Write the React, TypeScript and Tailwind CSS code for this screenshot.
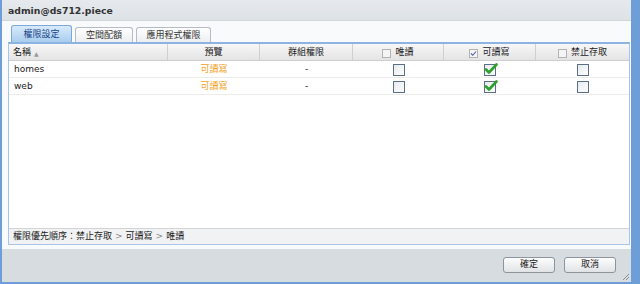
import React from 'react';

const font = { fontFamily: '"DejaVu Sans", "Noto Sans CJK TC", sans-serif' };

function Box({ checked }: { checked?: boolean }) {
  return (
    <svg width="14" height="13" viewBox="0 0 14 13" className="overflow-visible">
      <defs>
        <linearGradient id="bx" x1="0" y1="0" x2="1" y2="1">
          <stop offset="0" stopColor="#e6e9ee" />
          <stop offset="1" stopColor="#ffffff" />
        </linearGradient>
      </defs>
      <rect x="1.5" y="1.5" width="11" height="11" fill="url(#bx)" stroke="#5c6f86" strokeWidth="1" />
      {checked && (
        <path d="M3 6.5 L6 9.5 L13.5 1.5" fill="none" stroke="#2fa12a" strokeWidth="2.6" strokeLinecap="round" strokeLinejoin="round" />
      )}
    </svg>
  );
}

function MiniBox({ checked }: { checked?: boolean }) {
  return (
    <svg width="9" height="9" viewBox="0 0 9 9">
      <rect x="0.5" y="0.5" width="8" height="8" fill="#f4f4f4" stroke="#b3b3b3" />
      {checked && <path d="M2 4.5 L3.8 6.3 L7 2.5" fill="none" stroke="#4a5ea8" strokeWidth="1.1" />}
    </svg>
  );
}

const cols = ['w-[159px]', 'w-[92px]', 'w-[93px]', 'w-[91px]', 'w-[92px]', 'flex-1'];

const rows = [{ name: 'homes' }, { name: 'web' }];

export default function App() {
  return (
    <div className="w-[640px] h-[284px] bg-[#6d9ed8] pl-[2px] pr-[9px] pb-[2px] flex flex-col text-[9px] text-[#1b1b1b]" style={font}>
      <div className="flex-1 flex flex-col bg-[#d7dce1]">
        {/* title */}
        <div className="h-[21px] flex items-center px-[6px] pt-[1px] bg-gradient-to-b from-[#e6eaee] to-[#dde2e7] border-b border-[#d0d5da]">
          <span className="font-bold text-[9.3px] text-[#333]">admin@ds712.piece</span>
        </div>

        {/* body */}
        <div className="h-[228px] bg-[#f9fafb] pl-[6px] pr-[1px] pt-[5px] pb-[4px] flex flex-col">
          {/* tabs */}
          <div className="flex items-end gap-[3px] pl-[3px] h-[16px]">
            <div className="h-[17px] w-[61px] rounded-t-[3px] border border-b-0 border-[#7ea8db] bg-gradient-to-b from-[#d8eafa] to-[#a9cdee] flex items-center justify-center pt-[1px] text-[#15428b]">
              權限設定
            </div>
            <div className="h-[15px] w-[58px] rounded-t-[3px] border border-b-0 border-[#b6bcc3] bg-gradient-to-b from-[#ffffff] to-[#eceef0] flex items-center justify-center pt-[1px] text-[#333]">
              空間配額
            </div>
            <div className="h-[15px] w-[75px] rounded-t-[3px] border border-b-0 border-[#b6bcc3] bg-gradient-to-b from-[#ffffff] to-[#eceef0] flex items-center justify-center pt-[1px] text-[#333]">
              應用程式權限
            </div>
          </div>

          {/* panel */}
          <div className="flex-1 flex flex-col border-t-2 border-[#8db3e2] border-x border-b border-x-[#a9c4e6] border-b-[#a9c4e6] bg-white">
            {/* header */}
            <div className="h-[17px] flex bg-gradient-to-b from-[#f7f7f7] to-[#e4e4e4] border-b border-[#cfcfcf]">
              <div className={`${cols[0]} flex items-center pl-[4px] pt-[2px] border-r border-[#cfcfcf]`}>
                名稱 <span className="ml-[3px] text-[6px] text-[#999]">▲</span>
              </div>
              <div className={`${cols[1]} flex items-center justify-center pt-[2px] border-r border-[#cfcfcf]`}>預覽</div>
              <div className={`${cols[2]} flex items-center justify-center pt-[2px] border-r border-[#cfcfcf]`}>群組權限</div>
              <div className={`${cols[3]} flex items-center justify-center gap-[4px] pt-[2px] border-r border-[#cfcfcf]`}>
                <MiniBox /> 唯讀
              </div>
              <div className={`${cols[4]} flex items-center justify-center gap-[4px] pt-[2px] border-r border-[#cfcfcf]`}>
                <MiniBox checked /> 可讀寫
              </div>
              <div className={`${cols[5]} flex items-center justify-center gap-[4px] pt-[2px]`}>
                <MiniBox /> 禁止存取
              </div>
            </div>

            {rows.map(r => (
              <div key={r.name} className="h-[17px] flex border-b border-[#ececec]">
                <div className={`${cols[0]} flex items-center pl-[5px] pt-[2px] text-[9px]`}>{r.name}</div>
                <div className={`${cols[1]} flex items-center justify-center pt-[2px] text-[#f5a21b]`}>可讀寫</div>
                <div className={`${cols[2]} flex items-center justify-center pt-[2px]`}>-</div>
                <div className={`${cols[3]} flex items-center justify-center`}><Box /></div>
                <div className={`${cols[4]} flex items-center justify-center`}><Box checked /></div>
                <div className={`${cols[5]} flex items-center justify-center`}><Box /></div>
              </div>
            ))}

            <div className="flex-1" />

            {/* footer */}
            <div className="h-[16px] flex items-center pl-[4px] pt-[1px] bg-[#f1f2f3] border-t border-[#d4d4d4]">
              權限優先順序：禁止存取 <span className="mx-[3px] text-[#888]">&gt;</span> 可讀寫 <span className="mx-[3px] text-[#888]">&gt;</span> 唯讀
            </div>
          </div>
        </div>

        {/* buttons */}
        <div className="flex-1 flex items-start justify-end gap-[9px] pt-[8px] pr-[15px] relative">
          <button className="w-[52px] h-[16px] rounded-[3px] border border-[#8d949c] bg-gradient-to-b from-[#fdfdfd] to-[#e0e3e6] text-[9px] text-[#222]">確定</button>
          <button className="w-[52px] h-[16px] rounded-[3px] border border-[#8d949c] bg-gradient-to-b from-[#fdfdfd] to-[#e0e3e6] text-[9px] text-[#222]">取消</button>
          <svg className="absolute right-[1px] bottom-[1px]" width="8" height="8" viewBox="0 0 8 8">
            <path d="M7 1 L1 7 M7 4 L4 7" stroke="#8a9098" strokeWidth="1" />
          </svg>
        </div>
      </div>
    </div>
  );
}
